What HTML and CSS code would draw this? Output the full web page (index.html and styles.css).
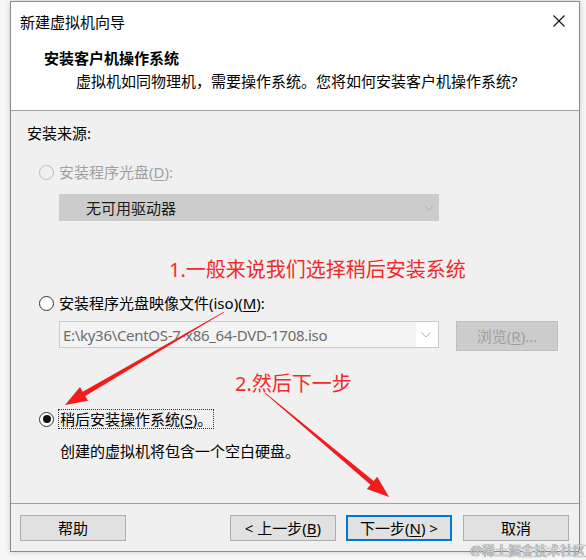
FILE: index.html
```html
<!DOCTYPE html>
<html lang="zh-CN">
<head>
<meta charset="utf-8">
<title>新建虚拟机向导</title>
<link rel="stylesheet" href="styles.css">
</head>
<body>
<div class="screen">
  <div class="dialog">
    <div class="titlebar">
      <span class="title">新建虚拟机向导</span>
      <svg class="close" width="12" height="12" viewBox="0 0 12 12"><path d="M0.5 0.5 L11.5 11.5 M11.5 0.5 L0.5 11.5" stroke="#111" stroke-width="1.1" fill="none"/></svg>
    </div>
    <div class="header">
      <div class="h-title">安装客户机操作系统</div>
      <div class="h-sub">虚拟机如同物理机，需要操作系统。您将如何安装客户机操作系统?</div>
    </div>
    <div class="content">
      <div class="section-label">安装来源:</div>
      <div class="radio-row disabled r1"><span class="radio"></span><span class="rlabel">安装程序光盘(<u>D</u>):</span></div>
      <div class="combo combo-off">
        <span class="combo-text">无可用驱动器</span>
        <svg class="chev" width="10" height="6" viewBox="0 0 10 6"><path d="M0.5 0.5 L5 5 L9.5 0.5" stroke="#b4b4b4" fill="none"/></svg>
      </div>
      <div class="note note1">1.一般来说我们选择稍后安装系统</div>
      <div class="radio-row r2"><span class="radio"></span><span class="rlabel">安装程序光盘映像文件(iso)(<u>M</u>):</span></div>
      <div class="iso-row">
        <div class="combo combo-iso">
          <span class="edit">E:\ky36\CentOS-7-x86_64-DVD-1708.iso</span>
          <span class="drop"><svg class="chev" width="10" height="6" viewBox="0 0 10 6"><path d="M0.5 0.5 L5 5 L9.5 0.5" stroke="#b4b4b4" fill="none"/></svg></span>
        </div>
        <div class="browse">浏览(<u>R</u>)...</div>
      </div>
      <div class="note note2">2.然后下一步</div>
      <div class="radio-row r3"><span class="radio checked"></span><span class="rlabel focus">稍后安装操作系统(<u>S</u>)。</span></div>
      <div class="desc">创建的虚拟机将包含一个空白硬盘。</div>
    </div>
    <div class="footer">
      <div class="btn">帮助</div>
      <div class="spacer"></div>
      <div class="btn">&lt; 上一步(<u>B</u>)</div>
      <div class="btn default">下一步(<u>N</u>) &gt;</div>
      <div class="btn">取消</div>
    </div>
  </div>
  <svg class="arrows" width="586" height="560" viewBox="0 0 586 560">
    <polygon fill="#f21c1c" points="224.2,312.3 223.8,311.7 82.7,391.7 80,387 65,405 88,400.8 85.3,396.1"/>
    <polygon fill="#f21c1c" points="264.7,393.3 265.3,392.7 373.7,481 377.2,476.8 389,497 366.9,489 370.5,484.8"/>
  </svg>
  <div class="watermark">@稀土掘金技术社区</div>
</div>
</body>
</html>
```
FILE: styles.css
```css
* { box-sizing: border-box; }
html, body { margin: 0; padding: 0; }
body {
  background: #f7f7f7;
  font-family: "Noto Sans", "Noto Sans CJK SC", sans-serif;
  font-size: 15px;
  line-height: 20px;
  color: #000;
}
u { text-decoration: underline; text-underline-offset: 2px; text-decoration-thickness: 1px; }

.screen {
  position: relative;
  width: 586px;
  height: 560px;
  overflow: hidden;
  padding-top: 1px;
}

.dialog {
  margin-left: 10px;
  width: 570px;
  height: 551px;
  border: 1px solid #8a8a8a;
  background: #f0f0f0;
  display: flex;
  flex-direction: column;
  box-shadow: 0 0 6px rgba(0,0,0,0.18);
}

.titlebar {
  height: 39px;
  background: #fff;
  display: flex;
  align-items: center;
  justify-content: space-between;
  padding: 0 14px 0 9px;
}
.close { display: block; margin-top: -1px; }

.header {
  height: 70px;
  background: #fff;
  border-bottom: 1px solid #a0a0a0;
  padding-top: 6px;
}
.h-title { font-weight: bold; line-height: 22px; padding-left: 33px; }
.h-sub { margin-top: 2px; padding-left: 65px; }

.content {
  flex: 1;
  padding-top: 12px;
}
.section-label { margin-left: 16px; }

.radio-row { display: flex; align-items: center; margin-left: 28px; height: 20px; }
.radio {
  width: 15px; height: 15px;
  border-radius: 50%;
  border: 1px solid #333;
  background: #fff;
  margin-right: 5px;
  display: flex; align-items: center; justify-content: center;
  flex: none;
}
.radio.checked::after {
  content: "";
  width: 8px; height: 8px;
  border-radius: 50%;
  background: #111;
}
.disabled .radio { border-color: #bcbcbc; background: #f0f0f0; }
.disabled .rlabel { color: #a0a0a0; }
.r1 { margin-top: 19px; }
.r2 { margin-top: 9px; }
.r3 { margin-top: 11px; }
.r3 .radio { margin-right: 4px; }
.focus {
  border: 1px dotted #333;
  padding: 0 1px;
  line-height: 18px;
}

.combo {
  margin-left: 48px;
  width: 380px;
  height: 27px;
  display: flex;
  align-items: center;
}
.combo-off {
  margin-top: 12px;
  background: #cccccc;
  padding-left: 27px;
  justify-content: space-between;
  padding-right: 5px;
  color: #1a1a1a;
}
.chev { display: block; }

.note {
  color: #f02b2b;
  font-size: 20px;
  line-height: 28px;
}
.note1 { margin-top: 35px; margin-left: 158px; }
.note2 { margin-top: 19px; margin-left: 224px; }

.iso-row { display: flex; align-items: flex-start; margin-top: 8px; }
.combo-iso {
  border: 1px solid #cccccc;
  background: #fff;
  align-items: stretch;
}
.edit {
  flex: 1;
  background: #f3f3f3;
  color: #6d6d6d;
  padding-left: 3px;
  letter-spacing: -0.3px;
  display: flex;
  align-items: center;
}
.drop {
  width: 22px;
  display: flex;
  align-items: center;
  justify-content: center;
  padding-right: 2px;
}
.browse {
  margin-left: 17px;
  width: 102px;
  height: 30px;
  background: #cccccc;
  border: 1px solid #bfbfbf;
  color: #a0a0a0;
  display: flex;
  align-items: center;
  justify-content: center;
}

.desc { margin-top: 12px; margin-left: 49px; }

.footer {
  height: 48px;
  border-top: 1px solid #a0a0a0;
  display: flex;
  align-items: flex-start;
  padding: 11px 10px 0 9px;
}
.spacer { flex: 1; }
.btn {
  width: 106px;
  height: 26px;
  background: #e1e1e1;
  border: 1px solid #adadad;
  display: flex;
  align-items: center;
  justify-content: center;
}
.btn + .btn { margin-left: 10px; }
.btn.default { border: 2px solid #0078d7; }
.btn.default + .btn { margin-left: 11px; }

.arrows { position: absolute; left: 0; top: 0; pointer-events: none; }

.watermark {
  position: absolute;
  right: 0;
  top: 541px;
  font-size: 13px;
  line-height: 18px;
  color: #d4d4d4;
  text-shadow: 0 0 1px #6a6a6a, 0 0 1px #8a8a8a;
}
```
